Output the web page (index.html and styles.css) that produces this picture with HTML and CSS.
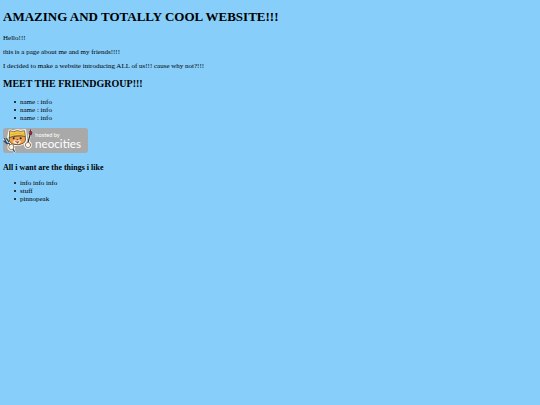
FILE: index.html
```html
<!DOCTYPE html>
<html lang="en">
<head>
<meta charset="utf-8">
<title>Amazing and totally cool website</title>
<link rel="stylesheet" href="styles.css">
</head>
<body>
<h1>AMAZING AND TOTALLY COOL WEBSITE!!!</h1>
<p>Hello!!!</p>
<p>this is a page about me and my friends!!!!</p>
<p>I decided to make a website introducing ALL of us!!! cause why not?!!!</p>
<h2>MEET THE FRIENDGROUP!!!</h2>
<ul>
<li>name : info</li>
<li>name : info</li>
<li>name : info</li>
</ul>
<a class="host" href="#">
<svg class="badge" viewBox="0 0 255 75" role="img" aria-label="hosted by neocities">
<rect width="255" height="75" rx="9" fill="#a9a9a9"/>
<g stroke-linecap="round" stroke-linejoin="round">
<g fill="#fff" stroke="#fff" stroke-width="7">
<path d="M20 8 32 11Q43 5 52 9L66 7 68 25Q72 38 62 45 49 54 32 49 17 44 16 29Z"/>
<path d="M4 35 22 48 34 70M82 9 76 45"/>
<circle cx="25" cy="57" r="8"/>
<circle cx="75" cy="51" r="8"/>
</g>
<path d="M19 28Q15 43 31 49 49 54 62 45 71 38 66 24Z" fill="#f0a047" stroke="#35251b" stroke-width="2"/>
<path d="M30 41Q35 35 41 38 50 35 54 41 51 48 42 48 32 47 30 41Z" fill="#fff5e5"/>
<path d="M19 29 20 8 32 11Q43 5 52 10L65 8 67 26Q43 18 19 29Z" fill="#f7ca45" stroke="#4b3925" stroke-width="2"/>
<path d="M24 20Q43 11 63 19" fill="none" stroke="#d9a030" stroke-width="2"/>
<circle cx="32" cy="31" r="3" fill="#271e1b"/>
<circle cx="53" cy="31" r="3" fill="#271e1b"/>
<path d="M40 34 46 34 43 37Z" fill="#4a1e19"/>
<path d="M37 40Q43 43 49 40L44 46Z" fill="#b9342c" stroke="#4a1e19"/>
<path d="M5 32 11 45 18 46 34 70M11 32 17 41M3 39 12 47" fill="none" stroke="#344e63" stroke-width="4"/>
<path d="M82 17 75 43" stroke="#3b2920" stroke-width="4"/>
<path d="M82 6Q90 13 85 20L79 19Q77 13 82 6Z" fill="#a72533" stroke="#3c252b" stroke-width="2"/>
<circle cx="25" cy="57" r="8" fill="#fff4df" stroke="#66503b" stroke-width="2"/>
<circle cx="75" cy="51" r="8" fill="#fff4df" stroke="#66503b" stroke-width="2"/>
</g>
<text class="small-label" x="97" y="27">hosted by</text>
<text class="brand" x="96" y="59">neocities</text>
</svg>
</a>
<h3>All i want are the things i like</h3>
<ul>
<li>info info info</li>
<li>stuff</li>
<li>pinnopeak</li>
</ul>
</body>
</html>
```
FILE: styles.css
```css
body {
  margin: 9px 3px;
  background: #87cefa;
  color: #000;
  font-family: "Liberation Serif", "Times New Roman", serif;
  font-size: 7px;
  line-height: 8px;
}
h1 {
  margin: 0 0 9px;
  font-size: 13px;
  line-height: 16px;
}
p {
  margin: 6px 0;
}
h2 {
  margin: 8px 0;
  font-size: 10px;
  line-height: 12px;
}
h3 {
  margin: 10px 0 7px;
  font-size: 8px;
  line-height: 9px;
}
ul {
  margin: 0 0 6px;
  padding-left: 11px;
  list-style: none;
}
li {
  display: flex;
  align-items: center;
  gap: 4px;
}
li::before {
  content: "";
  width: 2px;
  height: 2px;
  border-radius: 1px;
  background: #000;
}
.host {
  display: block;
  width: 85px;
}
.badge {
  display: block;
  width: 100%;
}
.badge text {
  fill: #fff;
  font-family: Lato, sans-serif;
}
.badge .small-label {
  font-size: 17px;
}
.badge .brand {
  font-size: 35px;
}
```
